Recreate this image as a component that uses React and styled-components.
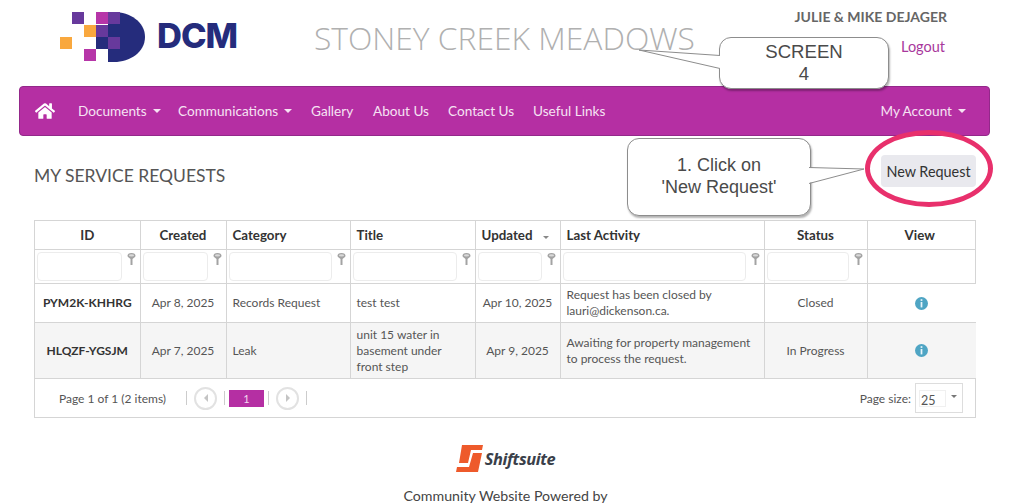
import React from 'react';
import styled, { createGlobalStyle } from 'styled-components';
import { FaHome } from 'react-icons/fa';

const GlobalStyle = createGlobalStyle`
  html, body {
    margin: 0;
    padding: 0;
    overflow: hidden;
    background: #fff;
    font-family: "Lato", "Noto Sans", sans-serif;
    color: #555;
  }
`;

const Page = styled.div`
  position: relative;
  width: 1024px;
  height: 504px;
  overflow: hidden;
`;

const Header = styled.header`
  display: flex;
  height: 86px;
  padding-left: 60px;
`;

const LogoWrap = styled.div`
  display: flex;
  align-items: flex-start;
  gap: 11px;
  width: 254px;
  padding-top: 12px;
  box-sizing: border-box;
`;

const LogoWord = styled.span`
  font-family: "Inter", sans-serif;
  font-weight: 800;
  font-size: 34.5px;
  line-height: 48px;
  letter-spacing: -1px;
  color: #252c7c;
`;

const SiteTitle = styled.h1`
  margin: 19px 0 0;
  font-family: "Open Sans", sans-serif;
  font-weight: 300;
  font-size: 31.8px;
  line-height: 38px;
  color: #b0b0b0;
  white-space: nowrap;
`;

const UserBlock = styled.div`
  margin-left: auto;
  padding: 8px 77px 0 0;
  text-align: right;
`;

const UserName = styled.div`
  font-size: 14px;
  font-weight: 700;
  line-height: 18px;
  color: #666;
`;

const Logout = styled.a`
  display: block;
  margin: 12px 2px 0 0;
  font-size: 14.5px;
  line-height: 18px;
  color: #a8389c;
`;

const Nav = styled.nav`
  display: flex;
  align-items: center;
  height: 50px;
  margin: 0 34px 0 19px;
  padding: 0 23px 0 15px;
  box-sizing: border-box;
  background: #b52fa3;
  border: 1px solid #93288a;
  border-radius: 4px;
  color: #f6e3f3;
  font-size: 13.6px;
`;

const HomeLink = styled.span`
  display: flex;
  width: 43px;
  color: #fff;
  font-size: 20px;
`;

const NavItem = styled.span`
  display: flex;
  align-items: center;
  gap: 6px;
  width: ${p => p.$w}px;
  white-space: nowrap;
`;

const Caret = styled.i`
  width: 0;
  height: 0;
  border-left: 4px solid transparent;
  border-right: 4px solid transparent;
  border-top: 4px solid currentColor;
`;

const AccountItem = styled(NavItem)`
  width: auto;
  margin-left: auto;
`;

const TitleRow = styled.div`
  display: flex;
  align-items: center;
  justify-content: space-between;
  height: 32px;
  margin: 19px 48px 33px 34px;
`;

const Heading = styled.h2`
  margin: 0;
  padding-top: 9px;
  font-size: 17.5px;
  font-weight: 400;
  color: #555;
`;

const NewButton = styled.button`
  width: 95px;
  height: 32px;
  padding: 0;
  border: 0;
  border-radius: 4px;
  background: #e9e9ee;
  font: 400 14.4px "Lato", sans-serif;
  color: #333;
`;

const Grid = styled.div`
  width: 942px;
  margin-left: 34px;
  box-sizing: border-box;
  border: 1px solid #d5d5d5;
  border-top: 0;
`;

const Table = styled.table`
  width: 100%;
  table-layout: fixed;
  border-collapse: collapse;
  font-size: 12px;
  line-height: 16px;
`;

const Th = styled.th`
  height: 29px;
  padding: ${p => (p.$last ? '0 10px 0 6px' : '0 6px')};
  box-sizing: border-box;
  border: 1px solid #d5d5d5;
  border-left-width: ${p => (p.$first ? 0 : 1)}px;
  border-right-width: ${p => (p.$last ? 0 : 1)}px;
  font-size: 13.3px;
  font-weight: 700;
  color: #333;
  text-align: ${p => (p.$left ? 'left' : 'center')};
  white-space: nowrap;
`;

const SortMark = styled.i`
  display: inline-block;
  margin: 0 0 1px 11px;
  border-left: 3px solid transparent;
  border-right: 3px solid transparent;
  border-top: 3px solid #888;
`;

const FilterCell = styled.td`
  height: 34px;
  padding: 2px 0 2px 2px;
  box-sizing: border-box;
  border: 1px solid #d5d5d5;
  border-left-width: ${p => (p.$first ? 0 : 1)}px;
  border-right-width: ${p => (p.$last ? 0 : 1)}px;
`;

const FilterWrap = styled.div`
  display: flex;
  height: 29px;
`;

const FilterInput = styled.div`
  flex: 1;
  border: 1px solid #ececec;
  border-radius: 4px;
`;

const FilterIcon = styled.svg`
  flex: none;
  width: 9px;
  height: 12px;
  margin: 1px 4px 0 5px;
`;

const Row = styled.tr`
  background: ${p => (p.$alt ? '#f5f5f5' : '#fff')};
`;

const Td = styled.td`
  height: ${p => p.$h}px;
  padding: 0 6px;
  box-sizing: border-box;
  border: 1px solid #d5d5d5;
  border-left-width: ${p => (p.$first ? 0 : 1)}px;
  border-right-width: ${p => (p.$last ? 0 : 1)}px;
  color: ${p => (p.$strong ? '#333' : '#555')};
  font-weight: ${p => (p.$strong ? 700 : 400)};
  text-align: ${p => (p.$left ? 'left' : 'center')};
  white-space: ${p => (p.$left ? 'normal' : 'nowrap')};
`;

const InfoIcon = styled.svg`
  display: block;
  width: 13px;
  height: 13px;
  margin: 0 auto;
`;

const Pager = styled.div`
  display: flex;
  align-items: center;
  height: 38px;
  padding: 0 12px 0 24px;
  font-size: 12px;
  color: #555;
`;

const PageInfo = styled.span`
  width: 127px;
  white-space: nowrap;
`;

const PageSep = styled.i`
  width: 1px;
  height: 14px;
  background: #ccc;
`;

const PageArrow = styled.span`
  display: flex;
  align-items: center;
  justify-content: center;
  width: 23px;
  height: 23px;
  margin: 0 7px;
  box-sizing: border-box;
  border: 2px solid #e2e2e2;
  border-radius: 50%;
`;

const ArrowMark = styled.i`
  border-top: 4px solid transparent;
  border-bottom: 4px solid transparent;
  border-${p => (p.$next ? 'left' : 'right')}: 4px solid #c4c4c4;
`;

const PageCurrent = styled.span`
  width: 35px;
  height: 17px;
  margin: 0 4px;
  background: #b52fa3;
  color: #f3d8ef;
  font-size: 11px;
  line-height: 17px;
  text-align: center;
`;

const SizeLabel = styled.span`
  margin-left: auto;
  margin-right: 4px;
`;

const SizeSelect = styled.div`
  display: flex;
  align-items: center;
  width: 48px;
  height: 30px;
  padding-left: 3px;
  box-sizing: border-box;
  border: 1px solid #ddd;
`;

const SizeValue = styled.span`
  width: 27px;
  height: 17px;
  border: 1px solid #f0f0f0;
  box-sizing: border-box;
  font-size: 12.5px;
  line-height: 20px;
  padding-left: 1px;
`;

const SizeCaret = styled.i`
  margin: -4px 0 0 5px;
  border-left: 3px solid transparent;
  border-right: 3px solid transparent;
  border-top: 3px solid #777;
`;

const Footer = styled.footer`
  display: flex;
  flex-direction: column;
  align-items: center;
  padding: 26px 13px 0 0;
`;

const BrandRow = styled.div`
  display: flex;
  align-items: center;
  gap: 2px;
  height: 28px;
`;

const BrandWord = styled.span`
  font-family: "Open Sans", sans-serif;
  font-style: italic;
  font-weight: 700;
  font-size: 16.4px;
  letter-spacing: -0.4px;
  color: #3a3f4a;
`;

const PoweredBy = styled.p`
  margin: 15px 0 0;
  font-size: 14.2px;
  line-height: 18px;
  color: #444;
`;

const Callout = styled.div`
  position: absolute;
  left: ${p => p.$x}px;
  top: ${p => p.$y}px;
  width: ${p => p.$w}px;
  height: ${p => p.$h}px;
  padding-bottom: ${p => p.$lift}px;
  display: flex;
  align-items: center;
  justify-content: center;
  box-sizing: border-box;
  border: 1px solid #8d8d8d;
  border-radius: 12px;
  background: #fff;
  box-shadow: 1px 2px 2px rgba(0, 0, 0, 0.3);
  font: ${p => p.$size}px/22px "Liberation Sans", Arial, sans-serif;
  color: #4a4a4a;
  text-align: center;
`;

const Tail = styled.svg`
  position: absolute;
  left: ${p => p.$x}px;
  top: ${p => p.$y}px;
  overflow: visible;
`;

const Ring = styled.div`
  position: absolute;
  left: 865px;
  top: 130px;
  width: 128px;
  height: 77px;
  box-sizing: border-box;
  border: 5px solid #e8306c;
  border-radius: 50%;
`;

const columns = [105, 86, 124, 125, 85, 204, 103, 109];

const headers = [
  { label: 'ID' },
  { label: 'Created' },
  { label: 'Category', left: true },
  { label: 'Title', left: true },
  { label: 'Updated', left: true, sorted: true },
  { label: 'Last Activity', left: true },
  { label: 'Status' },
  { label: 'View' },
];

const requests = [
  {
    id: 'PYM2K-KHHRG',
    created: 'Apr 8, 2025',
    category: 'Records Request',
    title: 'test test',
    updated: 'Apr 10, 2025',
    activity: 'Request has been closed by lauri@dickenson.ca.',
    status: 'Closed',
    height: 39,
  },
  {
    id: 'HLQZF-YGSJM',
    created: 'Apr 7, 2025',
    category: 'Leak',
    title: 'unit 15 water in basement under front step',
    updated: 'Apr 9, 2025',
    activity: 'Awaiting for property management to process the request.',
    status: 'In Progress',
    height: 56,
    alt: true,
  },
];

const LogoMark = () => (
  <svg width="86" height="50" viewBox="0 0 86 50">
    <path d="M48 0h6c16 0 31 10 31 25s-15 25-31 25h-6z" fill="#252c7c" />
    <rect x="12" y="0" width="12" height="12" fill="#67399c" />
    <rect x="36" y="0" width="12" height="12" fill="#b635a8" />
    <rect x="48" y="0" width="12" height="12" fill="#67399c" />
    <rect x="24" y="13" width="12" height="12" fill="#f9a83e" />
    <rect x="36" y="13" width="12" height="12" fill="#67399c" />
    <rect x="0" y="25" width="12" height="12" fill="#f9a83e" />
    <rect x="36" y="25" width="12" height="12" fill="#252c7c" />
    <rect x="48" y="25" width="12" height="12" fill="#67399c" />
    <rect x="24" y="37" width="12" height="12" fill="#b635a8" />
  </svg>
);

const BrandMark = () => (
  <svg width="27" height="27" viewBox="0 0 27 27">
    <path d="M6 0H27L26 5H15L12 18H3z" fill="#ee5a2b" />
    <path d="M17 8H26L22 27H0L1 22H13z" fill="#ee5a2b" />
  </svg>
);

const FilterGlyph = () => (
  <FilterIcon viewBox="0 0 9 12">
    <path d="M0.5 3a4 3 0 0 1 8 0c0 1-2 2-3 3v6H3.5V6c-1-1-3-2-3-3z" fill="#a3a3a3" />
    <ellipse cx="4.5" cy="2.4" rx="2.6" ry="1.1" fill="#d9d9d9" />
  </FilterIcon>
);

const InfoGlyph = () => (
  <InfoIcon viewBox="0 0 12 12">
    <circle cx="6" cy="6" r="6" fill="#4fa5c4" />
    <rect x="5.2" y="2" width="1.6" height="1.6" fill="#e8f5fa" />
    <rect x="5.2" y="4.6" width="1.6" height="5" fill="#e8f5fa" />
  </InfoIcon>
);

export default function App() {
  const last = headers.length - 1;
  return (
    <Page>
      <GlobalStyle />
      <Header>
        <LogoWrap>
          <LogoMark />
          <LogoWord>DCM</LogoWord>
        </LogoWrap>
        <SiteTitle>STONEY CREEK MEADOWS</SiteTitle>
        <UserBlock>
          <UserName>JULIE &amp; MIKE DEJAGER</UserName>
          <Logout>Logout</Logout>
        </UserBlock>
      </Header>

      <Nav>
        <HomeLink><FaHome /></HomeLink>
        <NavItem $w={100}>Documents <Caret /></NavItem>
        <NavItem $w={133}>Communications <Caret /></NavItem>
        <NavItem $w={62}>Gallery</NavItem>
        <NavItem $w={75}>About Us</NavItem>
        <NavItem $w={85}>Contact Us</NavItem>
        <NavItem $w={80}>Useful Links</NavItem>
        <AccountItem>My Account <Caret /></AccountItem>
      </Nav>

      <TitleRow>
        <Heading>MY SERVICE REQUESTS</Heading>
        <NewButton>New Request</NewButton>
      </TitleRow>

      <Grid>
        <Table>
          <colgroup>
            {columns.map((w, i) => <col key={i} width={w} />)}
          </colgroup>
          <thead>
            <tr>
              {headers.map((h, i) => (
                <Th key={h.label} $left={h.left} $first={i === 0} $last={i === last}>
                  {h.label}
                  {h.sorted && <SortMark />}
                </Th>
              ))}
            </tr>
            <tr>
              {headers.map((h, i) => (
                <FilterCell key={h.label} $first={i === 0} $last={i === last}>
                  {i !== last && (
                    <FilterWrap>
                      <FilterInput />
                      <FilterGlyph />
                    </FilterWrap>
                  )}
                </FilterCell>
              ))}
            </tr>
          </thead>
          <tbody>
            {requests.map(r => (
              <Row key={r.id} $alt={r.alt}>
                <Td $h={r.height} $first $strong>{r.id}</Td>
                <Td $h={r.height}>{r.created}</Td>
                <Td $h={r.height} $left>{r.category}</Td>
                <Td $h={r.height} $left>{r.title}</Td>
                <Td $h={r.height}>{r.updated}</Td>
                <Td $h={r.height} $left>{r.activity}</Td>
                <Td $h={r.height}>{r.status}</Td>
                <Td $h={r.height} $last><InfoGlyph /></Td>
              </Row>
            ))}
          </tbody>
        </Table>
        <Pager>
          <PageInfo>Page 1 of 1 (2 items)</PageInfo>
          <PageSep />
          <PageArrow><ArrowMark /></PageArrow>
          <PageSep />
          <PageCurrent>1</PageCurrent>
          <PageSep />
          <PageArrow><ArrowMark $next /></PageArrow>
          <PageSep />
          <SizeLabel>Page size:</SizeLabel>
          <SizeSelect>
            <SizeValue>25</SizeValue>
            <SizeCaret />
          </SizeSelect>
        </Pager>
      </Grid>

      <Footer>
        <BrandRow>
          <BrandMark />
          <BrandWord>Shiftsuite</BrandWord>
        </BrandRow>
        <PoweredBy>Community Website Powered by</PoweredBy>
      </Footer>

      <Callout $x={719} $y={37} $w={170} $h={52} $size={18.6} $lift={0}>SCREEN<br />4</Callout>
      <Tail $x={637} $y={50} width="84" height="22">
        <polygon points="2,0 83,5 83,19" fill="#fff" />
        <polyline points="83,5.5 2,0 83,18.5" fill="none" stroke="#8d8d8d" />
      </Tail>

      <Callout $x={627} $y={138} $w={184} $h={78} $size={18} $lift={3}>1. Click on<br />'New Request'</Callout>
      <Tail $x={809} $y={167} width="56" height="18">
        <polygon points="0,1 55,2 0,16" fill="#fff" />
        <polyline points="0,0.5 55,2 0,16.5" fill="none" stroke="#8d8d8d" />
      </Tail>
      <Ring />
    </Page>
  );
}
